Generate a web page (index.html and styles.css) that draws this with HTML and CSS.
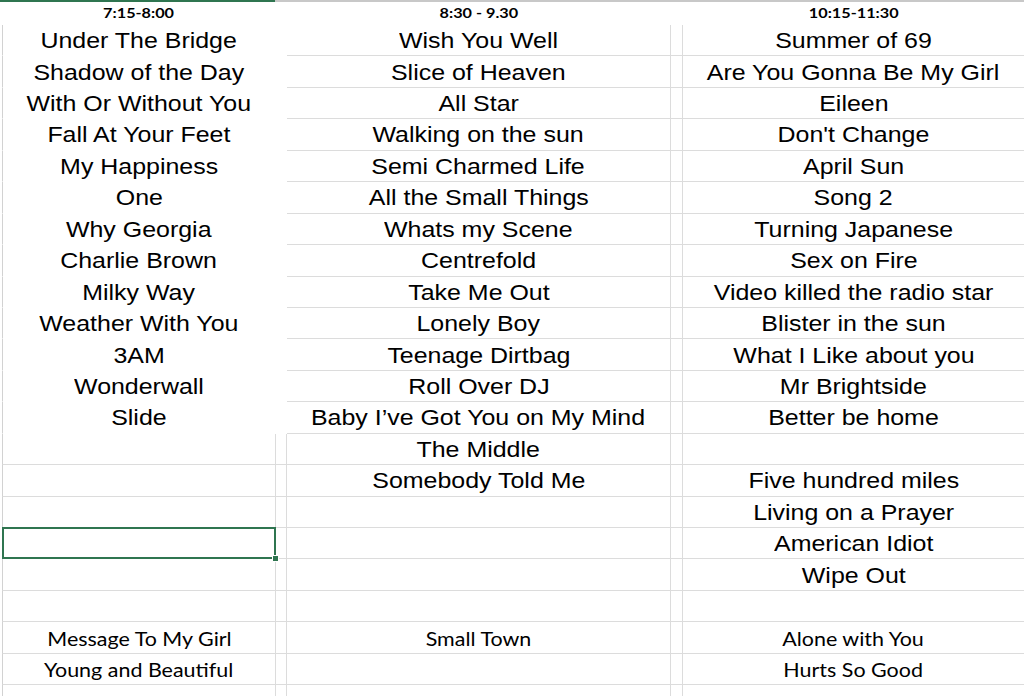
FILE: index.html
```html
<!DOCTYPE html>
<html lang="en">
<head>
<meta charset="utf-8">
<title>Setlist</title>
<link rel="stylesheet" href="styles.css">
</head>
<body>
<div class="topbar"><div class="topbar-active"></div><div class="topbar-rest"></div></div>
<div class="sheet">
  <!-- header row -->
  <div class="c h"><span class="t hd">7:15-8:00</span></div>
  <div class="c h n"></div>
  <div class="c h"><span class="t hd">8:30 - 9.30</span></div>
  <div class="c h n"></div>
  <div class="c h"><span class="t hd">10:15-11:30</span></div>

  <!-- 1 -->
  <div class="c a f"><span class="t s">Under The Bridge</span></div><div class="c n f"></div>
  <div class="c"><span class="t s">Wish You Well</span></div><div class="c n"></div>
  <div class="c"><span class="t s">Summer of 69</span></div>
  <!-- 2 -->
  <div class="c a f"><span class="t s">Shadow of the Day</span></div><div class="c n f"></div>
  <div class="c"><span class="t s">Slice of Heaven</span></div><div class="c n"></div>
  <div class="c"><span class="t s">Are You Gonna Be My Girl</span></div>
  <!-- 3 -->
  <div class="c a f"><span class="t s">With Or Without You</span></div><div class="c n f"></div>
  <div class="c"><span class="t s">All Star</span></div><div class="c n"></div>
  <div class="c"><span class="t s">Eileen</span></div>
  <!-- 4 -->
  <div class="c a f"><span class="t s">Fall At Your Feet</span></div><div class="c n f"></div>
  <div class="c"><span class="t s">Walking on the sun</span></div><div class="c n"></div>
  <div class="c"><span class="t s">Don't Change</span></div>
  <!-- 5 -->
  <div class="c a f"><span class="t s">My Happiness</span></div><div class="c n f"></div>
  <div class="c"><span class="t s">Semi Charmed Life</span></div><div class="c n"></div>
  <div class="c"><span class="t s">April Sun</span></div>
  <!-- 6 -->
  <div class="c a f"><span class="t s">One</span></div><div class="c n f"></div>
  <div class="c"><span class="t s">All the Small Things</span></div><div class="c n"></div>
  <div class="c"><span class="t s">Song 2</span></div>
  <!-- 7 -->
  <div class="c a f"><span class="t s">Why Georgia</span></div><div class="c n f"></div>
  <div class="c"><span class="t s">Whats my Scene</span></div><div class="c n"></div>
  <div class="c"><span class="t s">Turning Japanese</span></div>
  <!-- 8 -->
  <div class="c a f"><span class="t s">Charlie Brown</span></div><div class="c n f"></div>
  <div class="c"><span class="t s">Centrefold</span></div><div class="c n"></div>
  <div class="c"><span class="t s">Sex on Fire</span></div>
  <!-- 9 -->
  <div class="c a f"><span class="t s">Milky Way</span></div><div class="c n f"></div>
  <div class="c"><span class="t s">Take Me Out</span></div><div class="c n"></div>
  <div class="c"><span class="t s">Video killed the radio star</span></div>
  <!-- 10 -->
  <div class="c a f"><span class="t s">Weather With You</span></div><div class="c n f"></div>
  <div class="c"><span class="t s">Lonely Boy</span></div><div class="c n"></div>
  <div class="c"><span class="t s">Blister in the sun</span></div>
  <!-- 11 -->
  <div class="c a f"><span class="t s">3AM</span></div><div class="c n f"></div>
  <div class="c"><span class="t s">Teenage Dirtbag</span></div><div class="c n"></div>
  <div class="c"><span class="t s">What I Like about you</span></div>
  <!-- 12 -->
  <div class="c a f"><span class="t s">Wonderwall</span></div><div class="c n f"></div>
  <div class="c"><span class="t s">Roll Over DJ</span></div><div class="c n"></div>
  <div class="c"><span class="t s">Mr Brightside</span></div>
  <!-- 13 -->
  <div class="c a f"><span class="t s">Slide</span></div><div class="c n f"></div>
  <div class="c"><span class="t s">Baby I’ve Got You on My Mind</span></div><div class="c n"></div>
  <div class="c"><span class="t s">Better be home</span></div>
  <!-- 14 -->
  <div class="c a"></div><div class="c n"></div>
  <div class="c"><span class="t s">The Middle</span></div><div class="c n"></div>
  <div class="c"></div>
  <!-- 15 -->
  <div class="c a"></div><div class="c n"></div>
  <div class="c"><span class="t s">Somebody Told Me</span></div><div class="c n"></div>
  <div class="c"><span class="t s">Five hundred miles</span></div>
  <!-- 16 -->
  <div class="c a"></div><div class="c n"></div>
  <div class="c"></div><div class="c n"></div>
  <div class="c"><span class="t s">Living on a Prayer</span></div>
  <!-- 17 -->
  <div class="c a sel"></div><div class="c n"></div>
  <div class="c"></div><div class="c n"></div>
  <div class="c"><span class="t s">American Idiot</span></div>
  <!-- 18 -->
  <div class="c a"></div><div class="c n"></div>
  <div class="c"></div><div class="c n"></div>
  <div class="c"><span class="t s">Wipe Out</span></div>
  <!-- 19 -->
  <div class="c a"></div><div class="c n"></div>
  <div class="c"></div><div class="c n"></div>
  <div class="c"></div>
  <!-- 20 -->
  <div class="c a"><span class="t k">Message To My Girl</span></div><div class="c n"></div>
  <div class="c"><span class="t k">Small Town</span></div><div class="c n"></div>
  <div class="c"><span class="t k">Alone with You</span></div>
  <!-- 21 -->
  <div class="c a"><span class="t k">Young and Beautiful</span></div><div class="c n"></div>
  <div class="c"></div><div class="c n"></div>
  <div class="c"><span class="t k">Hurts So Good</span></div>
  <!-- 22 -->
  <div class="c a"></div><div class="c n"></div>
  <div class="c"></div><div class="c n"></div>
  <div class="c"></div>
</div>
</body>
</html>
```
FILE: styles.css
```css
html, body {
  margin: 0;
  padding: 0;
  background: #ffffff;
  overflow: hidden;
}

body {
  font-family: "Liberation Sans", Arial, sans-serif;
  color: #000;
}

.topbar {
  display: flex;
  height: 2px;
}

.topbar-active {
  width: 275px;
  background: #2f7550;
}

.topbar-rest {
  flex: 1;
  background: #c8c8c8;
}

.sheet {
  display: grid;
  margin-left: 2px;
  grid-template-columns: 274px 11px 384px 12px 342px;
  grid-template-rows: 23px;
  grid-auto-rows: 31.45px;
}

.c {
  box-sizing: border-box;
  display: flex;
  align-items: center;
  justify-content: center;
  border-right: 1px solid #dcdcdc;
  border-bottom: 1px solid #dcdcdc;
  white-space: nowrap;
  min-width: 0;
}

.c.a {
  border-left: 1px solid #d2d2d2;
}

.c.h {
  border-right-color: transparent;
  border-bottom-color: transparent;
}

.c.f {
  border-right-color: transparent;
  border-bottom-color: transparent;
}

.t {
  display: inline-block;
  transform: scaleX(1.16);
  white-space: nowrap;
}

.s {
  font-family: "Liberation Sans", Arial, sans-serif;
  font-size: 21.5px;
  line-height: 1.12;
  padding-top: 2px;
}

.hd {
  font-family: Lato, "Open Sans", sans-serif;
  font-weight: 700;
  font-size: 14px;
  line-height: 1.2;
}

.k {
  font-family: Lato, "Open Sans", sans-serif;
  font-size: 18.5px;
  line-height: 1.2;
  padding-top: 3px;
}

.sel {
  position: relative;
}

.sel::after {
  content: "";
  position: absolute;
  top: -1px;
  left: -1px;
  right: -1px;
  bottom: -1px;
  border: 2px solid #2f7550;
}

.sel::before {
  content: "";
  position: absolute;
  right: -4px;
  bottom: -4px;
  width: 5px;
  height: 5px;
  background: #2f7550;
  border: 1px solid #fff;
  z-index: 1;
}
```
